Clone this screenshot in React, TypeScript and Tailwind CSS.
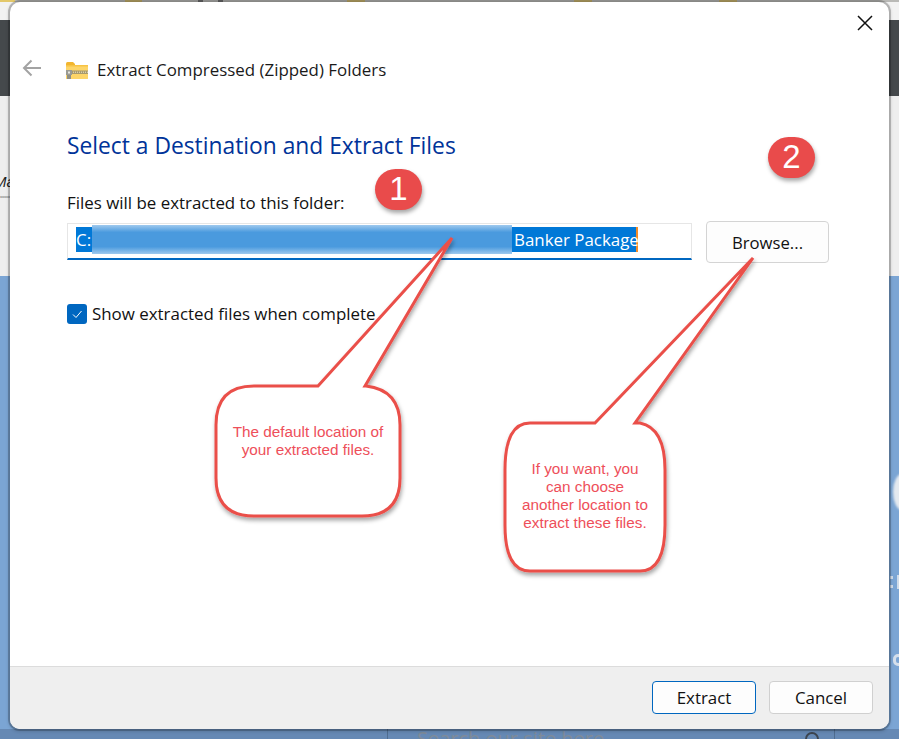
const sans = "font-['Open_Sans','Noto_Sans',sans-serif]";

function FolderIcon() {
  return (
    <svg width="22" height="17" viewBox="0 0 22 17" className="-ml-px shrink-0">
      <path d="M0 1.5 Q0 0 1.5 0 H7 L9 2 V4 H0 Z" fill="#f2b52e" />
      <path d="M0 3.5 H22 V16.5 Q22 17 21 17 H0 Z" fill="#fdd568" />
      <rect x="0" y="3" width="22" height="1.5" fill="#f7c344" />
      <rect x="4" y="8.5" width="18" height="3.5" fill="#a89a6c" />
      <path d="M5 10.2 H22" stroke="#efe7c8" strokeWidth="1" strokeDasharray="1 1" />
      <rect x="0" y="8" width="6" height="5" fill="#9b9b93" />
      <rect x="2" y="9.5" width="2" height="2" fill="#e7e7e0" />
      <rect x="1" y="13" width="4" height="4" fill="#8f8f86" />
    </svg>
  );
}

function Badge({ n, className }: { n: string; className: string }) {
  return (
    <div
      className={`absolute flex h-[41px] w-[47px] items-center justify-center rounded-full bg-[#e94b4b] pb-0.5 text-[33px] leading-none text-white shadow-[1px_3px_4px_rgba(0,0,0,0.35)] font-['Liberation_Sans',sans-serif] ${className}`}
    >
      {n}
    </div>
  );
}

function Callout({ className, lines }: { className: string; lines: string[] }) {
  return (
    <div
      className={`absolute text-center text-[15.3px] leading-[18px] text-[#ee4f5a] font-['Liberation_Sans',sans-serif] ${className}`}
    >
      {lines.map((l) => (
        <div key={l}>{l}</div>
      ))}
    </div>
  );
}

// the bits of the page that show along the top edge of the dialog
const topMarks = [
  "left-0 w-[15px] bg-[#e3c86a]",
  "left-[125px] w-[17px] bg-[#c9b46e]",
  "left-[198px] w-[5px] bg-[#6f6f6f]",
  "left-[218px] w-[5px] bg-[#6f6f6f]",
  "left-[347px] w-[18px] bg-[#c9b46e]",
  "left-[574px] w-[18px] bg-[#c9b46e]",
  "left-[719px] w-[18px] bg-[#c9b46e]",
];

export default function App() {
  return (
    <div className={`relative h-[739px] w-[899px] overflow-hidden ${sans}`}>
      {/* page behind the dialog */}
      <div className="relative h-[20px] bg-[#f2f2f2]">
        <div className="h-[2px] bg-[#b9b9b6]" />
        {topMarks.map((m) => (
          <div key={m} className={`absolute top-0 h-[2px] ${m}`} />
        ))}
      </div>
      <div className="h-[76px] bg-[#45494c]" />
      <div className="h-[180px] bg-[#eeeeee] pt-[74px] font-['Liberation_Sans',sans-serif]">
        <div className="-ml-[6px] text-[15px] italic leading-6 text-[#222]">Ma</div>
        <div className="text-[4px] leading-[5px] text-[#555]">xxxxx</div>
      </div>
      <div className="relative h-[453px] bg-[#7ba5d4]">
        <div className="absolute left-[893px] top-[198px] h-[36px] w-[18px] rounded-[50%] bg-[#e4e9ef] blur-[1px]" />
        <div className="absolute left-[890px] top-[300px] h-[3px] w-[3px] bg-[#cfdbe9]" />
        <div className="absolute left-[890px] top-[309px] h-[3px] w-[3px] bg-[#cfdbe9]" />
        <div className="absolute left-[897px] top-[299px] h-[14px] w-[2px] bg-[#cfdbe9]" />
        <div className="absolute left-[893px] top-[378px] h-[12px] w-[10px] rounded-full border-[3px] border-[#d5dfeb]" />
      </div>
      <div className="flex h-[10px] bg-[#6689b4]">
        <div className="ml-[387px] w-px bg-[#4f6d90]" />
        <div className="ml-[29px] overflow-hidden whitespace-nowrap text-[20px] leading-5 text-[#7f8b99]">
          Search our site here
        </div>
        <svg className="ml-[200px] mt-[2px] shrink-0" width="16" height="16" viewBox="0 0 16 16" fill="none" stroke="#3d4650" strokeWidth="2">
          <circle cx="8" cy="8" r="6" />
        </svg>
        <div className="ml-[14px] w-px bg-[#4f6d90]" />
      </div>

      {/* dialog window */}
      <div className="absolute left-[10px] top-[2px] flex h-[727px] w-[879px] flex-col overflow-hidden rounded-[10px] bg-white shadow-[0_0_0_2px_rgba(0,0,0,0.2),0_1px_3px_2px_rgba(0,0,0,0.12)]">
        <div className="flex h-[664px] flex-col pl-[57px]">
          <div className="flex h-[145px] shrink-0 flex-col">
            <div className="flex items-center pt-[56px]">
              <FolderIcon />
              <span className="ml-[9px] text-[16.9px] leading-6 text-[#1a1a1a]">
                Extract Compressed (Zipped) Folders
              </span>
            </div>
            <h1 className="mt-[48px] text-[22.8px] font-normal leading-8 text-[#003399]">
              Select a Destination and Extract Files
            </h1>
          </div>
          <p className="mt-[44px] text-[16.9px] leading-6 text-[#111]">
            Files will be extracted to this folder:
          </p>
          <div className="mt-[6px] flex items-start">
            <div className="mt-[2px] h-[37px] w-[625px] border border-b-2 border-[#e6e6e6] border-b-[#0067c0] pl-[8px] pt-[3px]">
              <div className="flex h-[25px] w-[562px] items-center border-r-2 border-[#f28c28] bg-[#0078d7] text-[16.9px] text-white">
                <span className="w-4 shrink-0">C:</span>
                <span className="h-[29px] w-[420px] shrink-0 bg-[linear-gradient(180deg,#9fc9ee_0%,#4a9ade_25%,#4a9ade_75%,#9fc9ee_100%)]" />
                <span className="ml-[2px] whitespace-nowrap">Banker Package</span>
              </div>
            </div>
            <button className="ml-[14px] h-[42px] w-[123px] rounded-[4px] border border-[#d4d4d4] bg-[#fdfdfd] pt-px text-[16.7px] text-[#111]">
              Browse...
            </button>
          </div>
          <div className="mt-[39px] flex items-center">
            <div className="flex h-5 w-5 items-center justify-center rounded-[3px] bg-[#0067c0]">
              <svg width="12" height="12" viewBox="0 0 12 12" fill="none" stroke="#fff" strokeWidth="1">
                <path d="M2 6.5 L5 9.5 L10.5 3" />
              </svg>
            </div>
            <span className="ml-[5px] text-[16.9px] leading-6 text-[#111]">
              Show extracted files when complete
            </span>
          </div>
        </div>
        <div className="flex flex-1 items-start justify-end gap-[13px] border-t border-[#dcdcdc] bg-[#efefef] pr-[16px] pt-[14px]">
          <button className="h-[33px] w-[104px] rounded-[4px] border border-[#0067c0] bg-[#fdfdfd] pt-px text-[16.9px] text-[#111]">
            Extract
          </button>
          <button className="h-[33px] w-[104px] rounded-[4px] border border-[#d0d0d0] bg-[#fdfdfd] pt-px text-[16.9px] text-[#111]">
            Cancel
          </button>
        </div>
      </div>

      {/* back arrow and close */}
      <svg className="absolute left-[22px] top-[59px]" width="20" height="18" viewBox="0 0 20 18" fill="none" stroke="#a3a3a3" strokeWidth="2">
        <path d="M19 9 H2 M9.5 1.5 L2 9 L9.5 16.5" />
      </svg>
      <svg className="absolute left-[857px] top-[15px]" width="16" height="16" viewBox="0 0 16 16" fill="none" stroke="#111" strokeWidth="1.5">
        <path d="M1 1 L15 15 M15 1 L1 15" />
      </svg>

      {/* annotations */}
      <Badge n="1" className="left-[375px] top-[169px]" />
      <Badge n="2" className="left-[768px] top-[137px]" />

      <svg className="pointer-events-none absolute left-0 top-0" width="899" height="739" fill="#fff" stroke="#ea4f4a" strokeWidth="3">
        <defs>
          <filter id="sh" x="-20%" y="-20%" width="140%" height="140%">
            <feDropShadow dx="1" dy="3" stdDeviation="2" floodColor="#000" floodOpacity="0.35" />
          </filter>
        </defs>
        <path
          filter="url(#sh)"
          d="M254 386 H318 L452 238 L365 386 H366 Q400 390 400 425 V478 Q400 516 362 516 H254 Q216 516 216 478 V425 Q216 386 254 386 Z"
        />
        <path
          filter="url(#sh)"
          d="M530 423 H595 L753 258 L635 423 H640 Q665 428 665 470 V525 Q665 571 640 571 H530 Q505 571 505 525 V470 Q505 423 530 423 Z"
        />
      </svg>
      <Callout className="left-[216px] top-[423px] w-[184px]" lines={["The default location of", "your extracted files."]} />
      <Callout className="left-[505px] top-[460px] w-[160px]" lines={["If you want, you", "can choose", "another location to", "extract these files."]} />
    </div>
  );
}
